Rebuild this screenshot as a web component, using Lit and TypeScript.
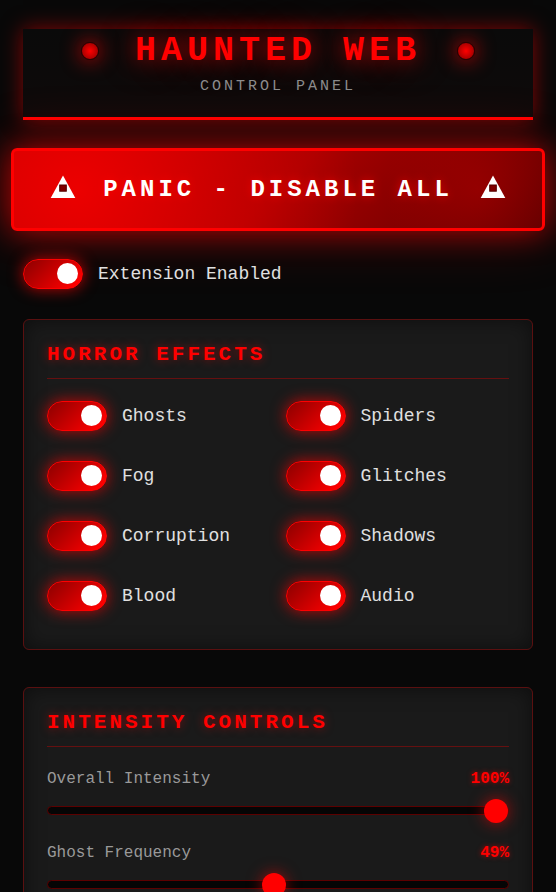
import { LitElement, html, css } from "lit";
import { customElement, property, state } from "lit/decorators.js";

const warning = html`<svg class="warn" viewBox="0 0 26 24" aria-hidden="true">
  <path d="M13 0.5 25.3 23H0.7Z" fill="#fff" />
  <rect class="hole" x="9.7" y="10" width="6.6" height="6.2" />
</svg>`;

@customElement("haunt-toggle")
export class HauntToggle extends LitElement {
  @property() label = "";
  @property({ type: Boolean }) checked = true;

  static styles = css`
    :host { display: block; }
    label {
      display: flex; align-items: center; gap: 15px;
      color: #e0e0e0; font-size: 18px; line-height: 30px; cursor: pointer;
    }
    input {
      appearance: none; flex: none; margin: 0; width: 60px; height: 30px;
      box-sizing: border-box; border: 1px solid #8b0000; border-radius: 15px;
      background: #0a0a0a; display: flex; align-items: center; padding: 0 4px 2px;
      cursor: pointer;
    }
    input::before {
      content: ""; width: 21px; height: 21px; border-radius: 50%; background: #666;
    }
    input:checked {
      justify-content: flex-end; border-color: #f00;
      background: linear-gradient(135deg, #8b0000, #f00 90%);
      box-shadow: 0 0 15px rgba(255, 0, 0, 0.75);
    }
    input:checked::before { background: #fff; }
  `;

  render() {
    return html`<label><input type="checkbox" .checked=${this.checked}
      @change=${(e: Event) => (this.checked = (e.target as HTMLInputElement).checked)} /><span>${this.label}</span></label>`;
  }
}

@customElement("haunt-slider")
export class HauntSlider extends LitElement {
  @property() label = "";
  @property({ type: Number }) value = 50;

  static styles = css`
    :host { display: block; }
    .head {
      display: flex; justify-content: space-between;
      font-size: 16px; line-height: 20px; margin-bottom: 9px; color: #999;
    }
    output { color: #f00; font-weight: bold; text-shadow: 0 0 5px rgba(255, 0, 0, 0.6); }
    input {
      appearance: none; display: block; width: 100%; height: 24px; margin: 0;
      background: none; cursor: pointer;
    }
    input::-webkit-slider-runnable-track {
      box-sizing: border-box; height: 9px; border: 1px solid #5c0000;
      border-radius: 5px; background: #050505;
    }
    input::-webkit-slider-thumb {
      appearance: none; width: 24px; height: 24px; margin-top: -8px;
      border-radius: 50%; background: #f00; box-shadow: 0 0 15px rgba(255, 0, 0, 0.6);
    }
  `;

  render() {
    return html`<div class="head"><label for="range">${this.label}</label><output for="range">${this.value}%</output></div>
      <input id="range" type="range" min="0" max="100" .value=${String(this.value)}
        @input=${(e: Event) => (this.value = Number((e.target as HTMLInputElement).value))} />`;
  }
}

@customElement("app-root")
export class AppRoot extends LitElement {
  @state() private effects = ["Ghosts", "Spiders", "Fog", "Glitches", "Corruption", "Shadows", "Blood", "Audio"];
  @state() private levels = [
    { label: "Overall Intensity", value: 100 },
    { label: "Ghost Frequency", value: 49 },
  ];

  static styles = css`
    :host {
      display: block; box-sizing: border-box; height: 100vh; overflow: hidden;
      padding: 29px 23px 0; background: #080808; color: #e0e0e0;
      font-family: "Courier New", "Liberation Mono", monospace;
    }
    header {
      padding: 3px 0 22px;
      background: linear-gradient(#0a0a0a, #0e0a0a);
      border-bottom: 3px solid #f00; text-align: center;
      box-shadow: 0 0 20px rgba(255, 0, 0, 0.5);
    }
    .brand { display: flex; align-items: center; justify-content: center; gap: 36px; }
    h1 {
      margin: 0; font-size: 35px; line-height: 38px; letter-spacing: 5px; color: #f00;
      text-shadow: 0 0 20px rgba(255, 0, 0, 0.6), 0 0 40px rgba(255, 0, 0, 0.4);
    }
    .eye {
      box-sizing: border-box; width: 18px; height: 18px; border-radius: 50%;
      border: 1px solid #300000; background: radial-gradient(circle, #f00, #a00000 80%);
      box-shadow: 0 0 20px rgba(255, 0, 0, 0.9);
    }
    .sub { margin: 8px 0 0; font-size: 15px; line-height: 17px; letter-spacing: 3px; color: #8c8c8c; }
    .panic {
      display: flex; align-items: center; justify-content: center; gap: 27px;
      width: calc(100% + 24px); height: 83px; margin: 28px -12px; padding: 0;
      border: 3px solid #f00; border-radius: 6px;
      background:
        radial-gradient(circle at 12% 50%, rgba(255, 0, 0, 0.75), transparent 60%),
        radial-gradient(circle at 88% 50%, rgba(190, 0, 0, 0.4), transparent 20%),
        linear-gradient(135deg, #b80000, #a80000 50%, #600000);
      box-shadow: 0 0 30px rgba(255, 0, 0, 0.6), 0 0 60px rgba(255, 0, 0, 0.3);
      color: #fff; font: bold 24px/28px "Courier New", "Liberation Mono", monospace;
      letter-spacing: 4px; white-space: nowrap; cursor: pointer;
      text-shadow: 0 0 10px rgba(255, 0, 0, 0.8);
    }
    .warn { width: 26px; height: 24px; flex: none; margin-bottom: 5px; }
    .hole { fill: #800000; stroke: #500000; stroke-width: 1; }
    .card {
      margin-top: 30px; padding: 23px; border: 1px solid #5a1010; border-radius: 6px;
      background: #1a1a1a; box-shadow: inset 0 0 20px rgba(0, 0, 0, 0.5);
    }
    .effects { padding-bottom: 38px; }
    .levels { margin-top: 37px; }
    h2 {
      margin: 0 0 22px; padding-bottom: 12px; border-bottom: 1px solid #651010;
      font-size: 21px; line-height: 23px; letter-spacing: 3px; color: #f00;
      text-shadow: 0 0 10px rgba(255, 0, 0, 0.5);
    }
    .grid { display: grid; grid-template-columns: 1fr 1fr; gap: 30px 15px; }
    .list { display: grid; gap: 21px; }
  `;

  render() {
    return html`
      <header>
        <div class="brand"><span class="eye"></span><h1>HAUNTED WEB</h1><span class="eye"></span></div>
        <p class="sub">CONTROL PANEL</p>
      </header>
      <button class="panic" type="button">${warning}<span>PANIC - DISABLE ALL</span>${warning}</button>
      <haunt-toggle label="Extension Enabled"></haunt-toggle>
      <section class="card effects">
        <h2>HORROR EFFECTS</h2>
        <div class="grid">${this.effects.map((e) => html`<haunt-toggle label=${e}></haunt-toggle>`)}</div>
      </section>
      <section class="card levels">
        <h2>INTENSITY CONTROLS</h2>
        <div class="list">${this.levels.map((l) => html`<haunt-slider label=${l.label} .value=${l.value}></haunt-slider>`)}</div>
      </section>
    `;
  }
}
